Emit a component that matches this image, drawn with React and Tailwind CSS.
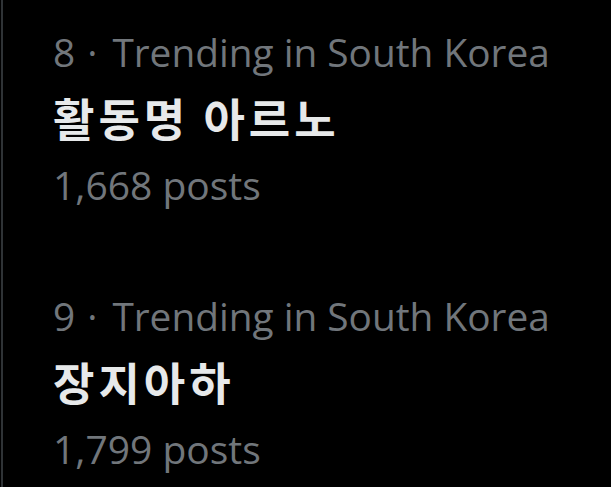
const TRENDS = [
  { rank: 8, region: 'South Korea', name: '활동명 아르노', posts: '1,668' },
  { rank: 9, region: 'South Korea', name: '장지아하', posts: '1,799' },
];

export default function App() {
  return (
    <div className="w-[611px] h-[487px] bg-black overflow-hidden pl-px">
      <div
        className="h-full border-l-2 border-[#2f3336] pl-[50px] pt-[26px] flex flex-col gap-[79px]"
        style={{ fontFamily: '"Open Sans", "Noto Sans CJK KR", sans-serif' }}
      >
        {TRENDS.map((t) => (
          <div key={t.rank} className="flex flex-col">
            <div className="flex text-[38.8px] leading-[53px] text-[#71767b] whitespace-nowrap">
              <span>{t.rank}</span>
              <span className="ml-[12px] mr-[15px]">·</span>
              <span>Trending in {t.region}</span>
            </div>
            <div
              className="mt-[12px] text-[45px] leading-[53px] font-bold tracking-[4px] text-[#e7e9ea] whitespace-nowrap"
              style={{ fontFamily: '"Noto Sans CJK KR", sans-serif' }}
            >
              {t.name}
            </div>
            <div className="mt-[14px] text-[39px] leading-[53px] text-[#71767b] whitespace-nowrap">
              {t.posts} posts
            </div>
          </div>
        ))}
      </div>
    </div>
  );
}
